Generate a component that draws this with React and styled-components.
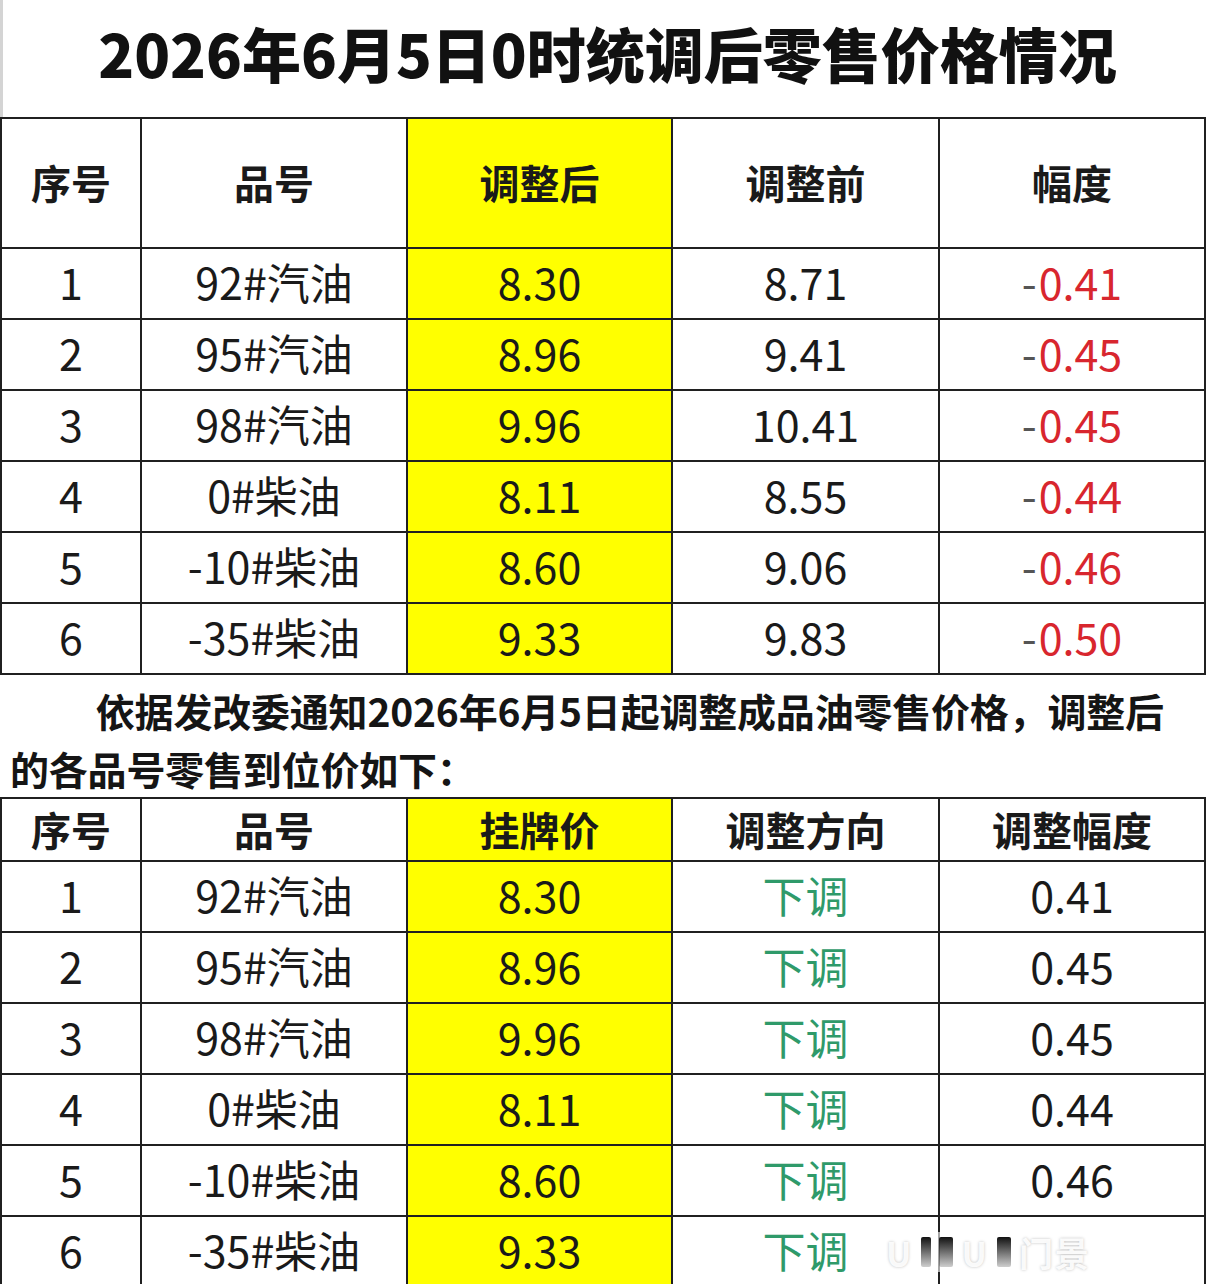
import React from 'react';
import styled, { createGlobalStyle } from 'styled-components';

const GlobalStyle = createGlobalStyle`
  html, body {
    margin: 0;
    padding: 0;
    background: #fff;
  }
  body {
    font-family: "Noto Sans CJK SC", "Noto Sans", sans-serif;
    color: #1a1a1a;
    overflow: hidden;
  }
`;

const Page = styled.div`
  width: 1206px;
  height: 1284px;
  overflow: hidden;
  position: relative;
  background: #fff;
`;

const Title = styled.h1`
  margin: 0;
  height: 117px;
  box-sizing: border-box;
  padding: 0 0 12px 6px;
  display: flex;
  align-items: center;
  justify-content: center;
  font-size: 59px;
  font-weight: 900;
  letter-spacing: 0;
  color: #111;
  border-left: 3px solid #d4d4d4;
`;

const Table = styled.div`
  display: grid;
  grid-template-columns: 138px 264px 263px 265px 264px;
  grid-template-rows: ${({ $head }) => $head}px;
  grid-auto-rows: 69px;
  gap: 2px;
  background: #202020;
  border: 2px solid #202020;
  border-bottom: ${({ $open }) => ($open ? 'none' : '2px solid #202020')};
`;

const Cell = styled.div`
  display: flex;
  align-items: center;
  justify-content: center;
  box-sizing: border-box;
  padding-bottom: ${({ $head }) => ($head ? '2px' : '6px')};
  background: ${({ $yellow }) => ($yellow ? '#ffff00' : '#fff')};
  font-size: ${({ $head }) => ($head ? '40px' : '43px')};
  font-weight: ${({ $head }) => ($head ? 700 : 400)};
  color: ${({ $tone }) =>
    $tone === 'red' ? '#d8262e' : $tone === 'green' ? '#2f9a6a' : '#1a1a1a'};
  white-space: nowrap;
  position: relative;
`;

const Minus = styled.span`
  color: #555;
  margin-right: 2px;
`;

const Note = styled.p`
  margin: 0;
  height: 122px;
  box-sizing: border-box;
  padding: 6px 0 0 10px;
  font-size: 39px;
  font-weight: 700;
  line-height: 58px;
  text-indent: 2.2em;
  color: #151515;
  letter-spacing: -0.2px;
  white-space: nowrap;
`;

const Watermark = styled.div`
  position: absolute;
  left: 886px;
  top: 1232px;
  width: 228px;
  height: 40px;
  display: flex;
  align-items: center;
  gap: 8px;
  font-size: 34px;
  font-weight: 700;
  color: rgba(255, 255, 255, 0.92);
  text-shadow: 0 0 3px rgba(0, 0, 0, 0.25);
  background: linear-gradient(90deg, rgba(255,255,255,0.55), rgba(255,255,255,0.75));
  letter-spacing: 2px;
`;

const Bar = styled.span`
  width: ${({ $w }) => $w}px;
  height: 30px;
  background: linear-gradient(180deg, #111, rgba(60,60,60,0.25));
  border-radius: 2px;
`;

const fuels = ['92#汽油', '95#汽油', '98#汽油', '0#柴油', '-10#柴油', '-35#柴油'];
const after = ['8.30', '8.96', '9.96', '8.11', '8.60', '9.33'];
const before = ['8.71', '9.41', '10.41', '8.55', '9.06', '9.83'];
const delta = ['0.41', '0.45', '0.45', '0.44', '0.46', '0.50'];

const App = () => (
  <Page>
    <GlobalStyle />
    <Title>2026年6月5日0时统调后零售价格情况</Title>

    <Table $head={128}>
      <Cell $head>序号</Cell>
      <Cell $head>品号</Cell>
      <Cell $head $yellow>调整后</Cell>
      <Cell $head>调整前</Cell>
      <Cell $head>幅度</Cell>
      {fuels.map((f, i) => (
        <React.Fragment key={f}>
          <Cell>{i + 1}</Cell>
          <Cell>{f}</Cell>
          <Cell $yellow>{after[i]}</Cell>
          <Cell>{before[i]}</Cell>
          <Cell $tone="red">
            <Minus>-</Minus>
            {delta[i]}
          </Cell>
        </React.Fragment>
      ))}
    </Table>

    <Note>
      依据发改委通知2026年6月5日起调整成品油零售价格，调整后
      <br />
      的各品号零售到位价如下：
    </Note>

    <Table $head={61} $open>
      <Cell $head>序号</Cell>
      <Cell $head>品号</Cell>
      <Cell $head $yellow>挂牌价</Cell>
      <Cell $head>调整方向</Cell>
      <Cell $head>调整幅度</Cell>
      {fuels.map((f, i) => (
        <React.Fragment key={f}>
          <Cell>{i + 1}</Cell>
          <Cell>{f}</Cell>
          <Cell $yellow>{after[i]}</Cell>
          <Cell $tone="green">下调</Cell>
          <Cell>{i === 5 ? '' : delta[i]}</Cell>
        </React.Fragment>
      ))}
    </Table>

    <Watermark>
      <span>U</span>
      <Bar $w={10} />
      <Bar $w={14} />
      <span>U</span>
      <Bar $w={14} />
      <span>门景</span>
    </Watermark>
  </Page>
);

export default App;
